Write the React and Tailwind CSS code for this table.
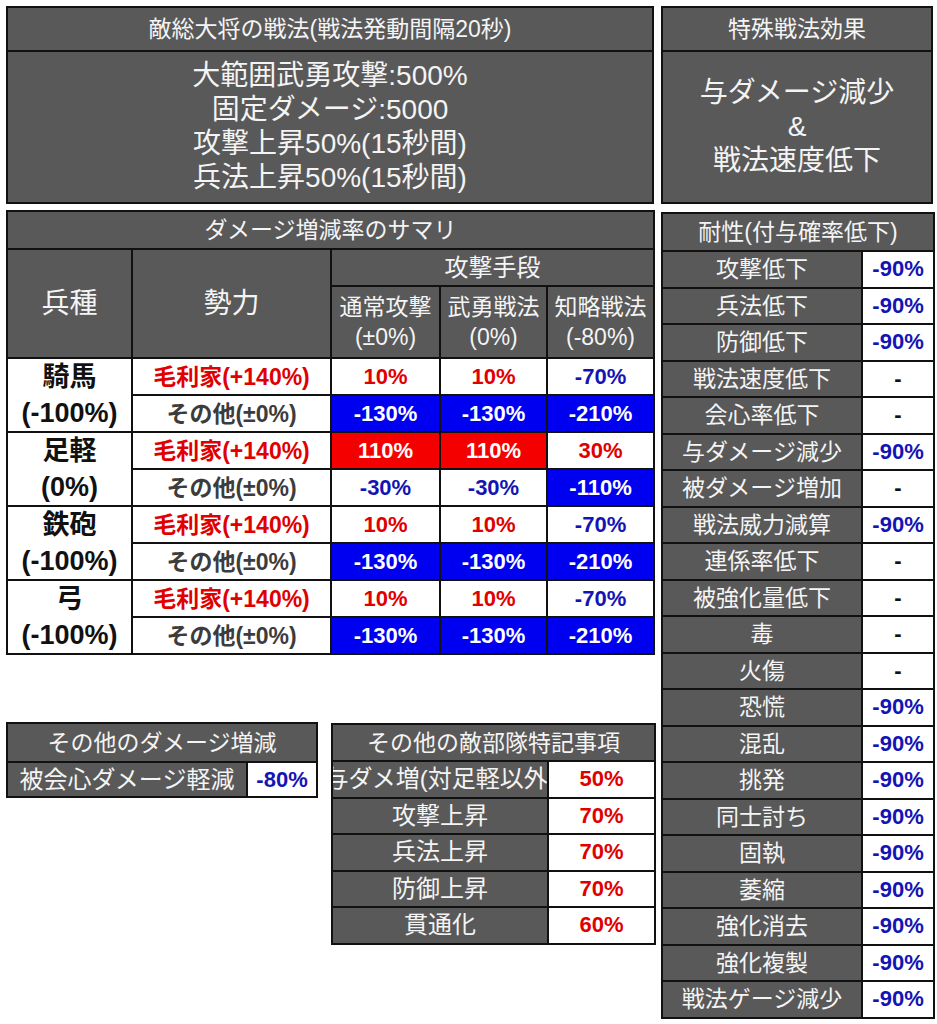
import React from "react"

const cellTone = {
  r: "bg-white text-[#e00000]",
  b: "bg-white text-[#1414b4]",
  B: "bg-[#0000f0] text-white",
  R: "bg-[#f50000] text-white",
}

const moriRow = [["10%", "r"], ["10%", "r"], ["-70%", "b"]]
const otherRow = [["-130%", "B"], ["-130%", "B"], ["-210%", "B"]]

const units = [
  { name: "騎馬", rate: "(-100%)", mori: moriRow, other: otherRow },
  {
    name: "足軽",
    rate: "(0%)",
    mori: [["110%", "R"], ["110%", "R"], ["30%", "r"]],
    other: [["-30%", "b"], ["-30%", "b"], ["-110%", "B"]],
  },
  { name: "鉄砲", rate: "(-100%)", mori: moriRow, other: otherRow },
  { name: "弓", rate: "(-100%)", mori: moriRow, other: otherRow },
]

const resist = [
  ["攻撃低下", "-90%"],
  ["兵法低下", "-90%"],
  ["防御低下", "-90%"],
  ["戦法速度低下", "-"],
  ["会心率低下", "-"],
  ["与ダメージ減少", "-90%"],
  ["被ダメージ増加", "-"],
  ["戦法威力減算", "-90%"],
  ["連係率低下", "-"],
  ["被強化量低下", "-"],
  ["毒", "-"],
  ["火傷", "-"],
  ["恐慌", "-90%"],
  ["混乱", "-90%"],
  ["挑発", "-90%"],
  ["同士討ち", "-90%"],
  ["固執", "-90%"],
  ["萎縮", "-90%"],
  ["強化消去", "-90%"],
  ["強化複製", "-90%"],
  ["戦法ゲージ減少", "-90%"],
]

const notes = [
  ["与ダメ増(対足軽以外)", "50%"],
  ["攻撃上昇", "70%"],
  ["兵法上昇", "70%"],
  ["防御上昇", "70%"],
  ["貫通化", "60%"],
]

const td = "border-2 border-[#111] p-0 text-center whitespace-nowrap leading-[30px]"
const gray = "bg-[#595959] text-[#f4f4f4]"

function DamageTable() {
  return (
    <table className="w-[647px] table-fixed border-collapse">
      <colgroup>
        <col className="w-[125px]" />
        <col className="w-[199px]" />
        <col className="w-[109px]" />
        <col className="w-[107px]" />
        <col className="w-[107px]" />
      </colgroup>
      <tbody>
        <tr className="h-[38px]">
          <td colSpan={5} className={`${td} ${gray} text-[23px]`}>ダメージ増減率のサマリ</td>
        </tr>
        <tr className="h-[37px]">
          <td rowSpan={2} className={`${td} ${gray} text-[28px]`}>兵種</td>
          <td rowSpan={2} className={`${td} ${gray} text-[28px]`}>勢力</td>
          <td colSpan={3} className={`${td} ${gray} text-[24px]`}>攻撃手段</td>
        </tr>
        <tr className="h-[72px]">
          {[["通常攻撃", "(±0%)"], ["武勇戦法", "(0%)"], ["知略戦法", "(-80%)"]].map(([a, b]) => (
            <td key={a} className={`${td} ${gray} text-[23px]`}>
              {a}
              <br />
              {b}
            </td>
          ))}
        </tr>
        {units.map((u) => (
          <React.Fragment key={u.name}>
            <tr className="h-[36.3px]">
              <td rowSpan={2} className={`${td} bg-white text-[27px] font-bold !leading-[36px] text-[#111]`}>
                {u.name}
                <br />
                {u.rate}
              </td>
              <td className={`${td} bg-white text-[23px] font-bold text-[#e00000]`}>毛利家(+140%)</td>
              {u.mori.map(([v, t], i) => (
                <td key={i} className={`${td} ${cellTone[t]} text-[22px] font-bold`}>{v}</td>
              ))}
            </tr>
            <tr className="h-[36.3px]">
              <td className={`${td} bg-white text-[23px] font-bold text-[#3c3c3c]`}>その他(±0%)</td>
              {u.other.map(([v, t], i) => (
                <td key={i} className={`${td} ${cellTone[t]} text-[22px] font-bold`}>{v}</td>
              ))}
            </tr>
          </React.Fragment>
        ))}
      </tbody>
    </table>
  )
}

function ResistTable() {
  return (
    <table className="w-[272px] table-fixed border-collapse">
      <colgroup>
        <col className="w-[200px]" />
        <col className="w-[72px]" />
      </colgroup>
      <tbody>
        <tr className="h-[38px]">
          <td colSpan={2} className={`${td} ${gray} text-[23px]`}>耐性(付与確率低下)</td>
        </tr>
        {resist.map(([label, v]) => (
          <tr key={label} className="h-[36.5px]">
            <td className={`${td} ${gray} text-[23px]`}>{label}</td>
            <td className={`${td} bg-white text-[22px] font-bold ${v === "-" ? "text-[#111]" : "text-[#1414b4]"}`}>{v}</td>
          </tr>
        ))}
      </tbody>
    </table>
  )
}

export default function App() {
  return (
    <div className="min-h-[1024px] w-[937px] bg-white font-['Liberation_Sans','Noto_Sans_CJK_JP',sans-serif]">
      <div className="flex gap-[7px] p-[6px] pr-[4px]">
        <div className="flex w-[648px] flex-col">
          <div className="flex h-[198px] flex-col border-2 border-[#111] bg-[#595959] text-[#f4f4f4]">
            <div className="flex h-[44px] items-center justify-center border-b-2 border-[#111] text-[23px]">
              敵総大将の戦法(戦法発動間隔20秒)
            </div>
            <div className="flex flex-1 flex-col items-center justify-center text-[28px] leading-[34px]">
              <div>大範囲武勇攻撃:500%</div>
              <div>固定ダメージ:5000</div>
              <div>攻撃上昇50%(15秒間)</div>
              <div>兵法上昇50%(15秒間)</div>
            </div>
          </div>

          <div className="mt-[6px]">
            <DamageTable />
          </div>

          <div className="mt-[67px] flex items-start gap-[13px]">
            <table className="w-[310px] table-fixed border-collapse">
              <colgroup>
                <col className="w-[240px]" />
                <col className="w-[70px]" />
              </colgroup>
              <tbody>
                <tr className="h-[39px]">
                  <td colSpan={2} className={`${td} ${gray} text-[23px]`}>その他のダメージ増減</td>
                </tr>
                <tr className="h-[35px]">
                  <td className={`${td} ${gray} text-[24px]`}>被会心ダメージ軽減</td>
                  <td className={`${td} bg-white text-[22px] font-bold text-[#1414b4]`}>-80%</td>
                </tr>
              </tbody>
            </table>

            <table className="mt-[1px] w-[323px] table-fixed border-collapse">
              <colgroup>
                <col className="w-[216px]" />
                <col className="w-[107px]" />
              </colgroup>
              <tbody>
                <tr className="h-[37px]">
                  <td colSpan={2} className={`${td} ${gray} text-[23px]`}>その他の敵部隊特記事項</td>
                </tr>
                {notes.map(([label, v]) => (
                  <tr key={label} className="h-[36.5px]">
                    <td className={`${td} ${gray} overflow-hidden text-[24px]`}>
                      <div className="flex justify-center">{label}</div>
                    </td>
                    <td className={`${td} bg-white text-[22px] font-bold text-[#e00000]`}>{v}</td>
                  </tr>
                ))}
              </tbody>
            </table>
          </div>
        </div>

        <div className="flex w-[272px] flex-col">
          <div className="flex h-[198px] flex-col border-2 border-[#111] bg-[#595959] text-[#f4f4f4]">
            <div className="flex h-[44px] items-center justify-center border-b-2 border-[#111] text-[23px]">
              特殊戦法効果
            </div>
            <div className="flex flex-1 flex-col items-center justify-center text-[28px] leading-[34px]">
              <div>与ダメージ減少</div>
              <div>&amp;</div>
              <div>戦法速度低下</div>
            </div>
          </div>
          <div className="mt-[8px]">
            <ResistTable />
          </div>
        </div>
      </div>
    </div>
  )
}
